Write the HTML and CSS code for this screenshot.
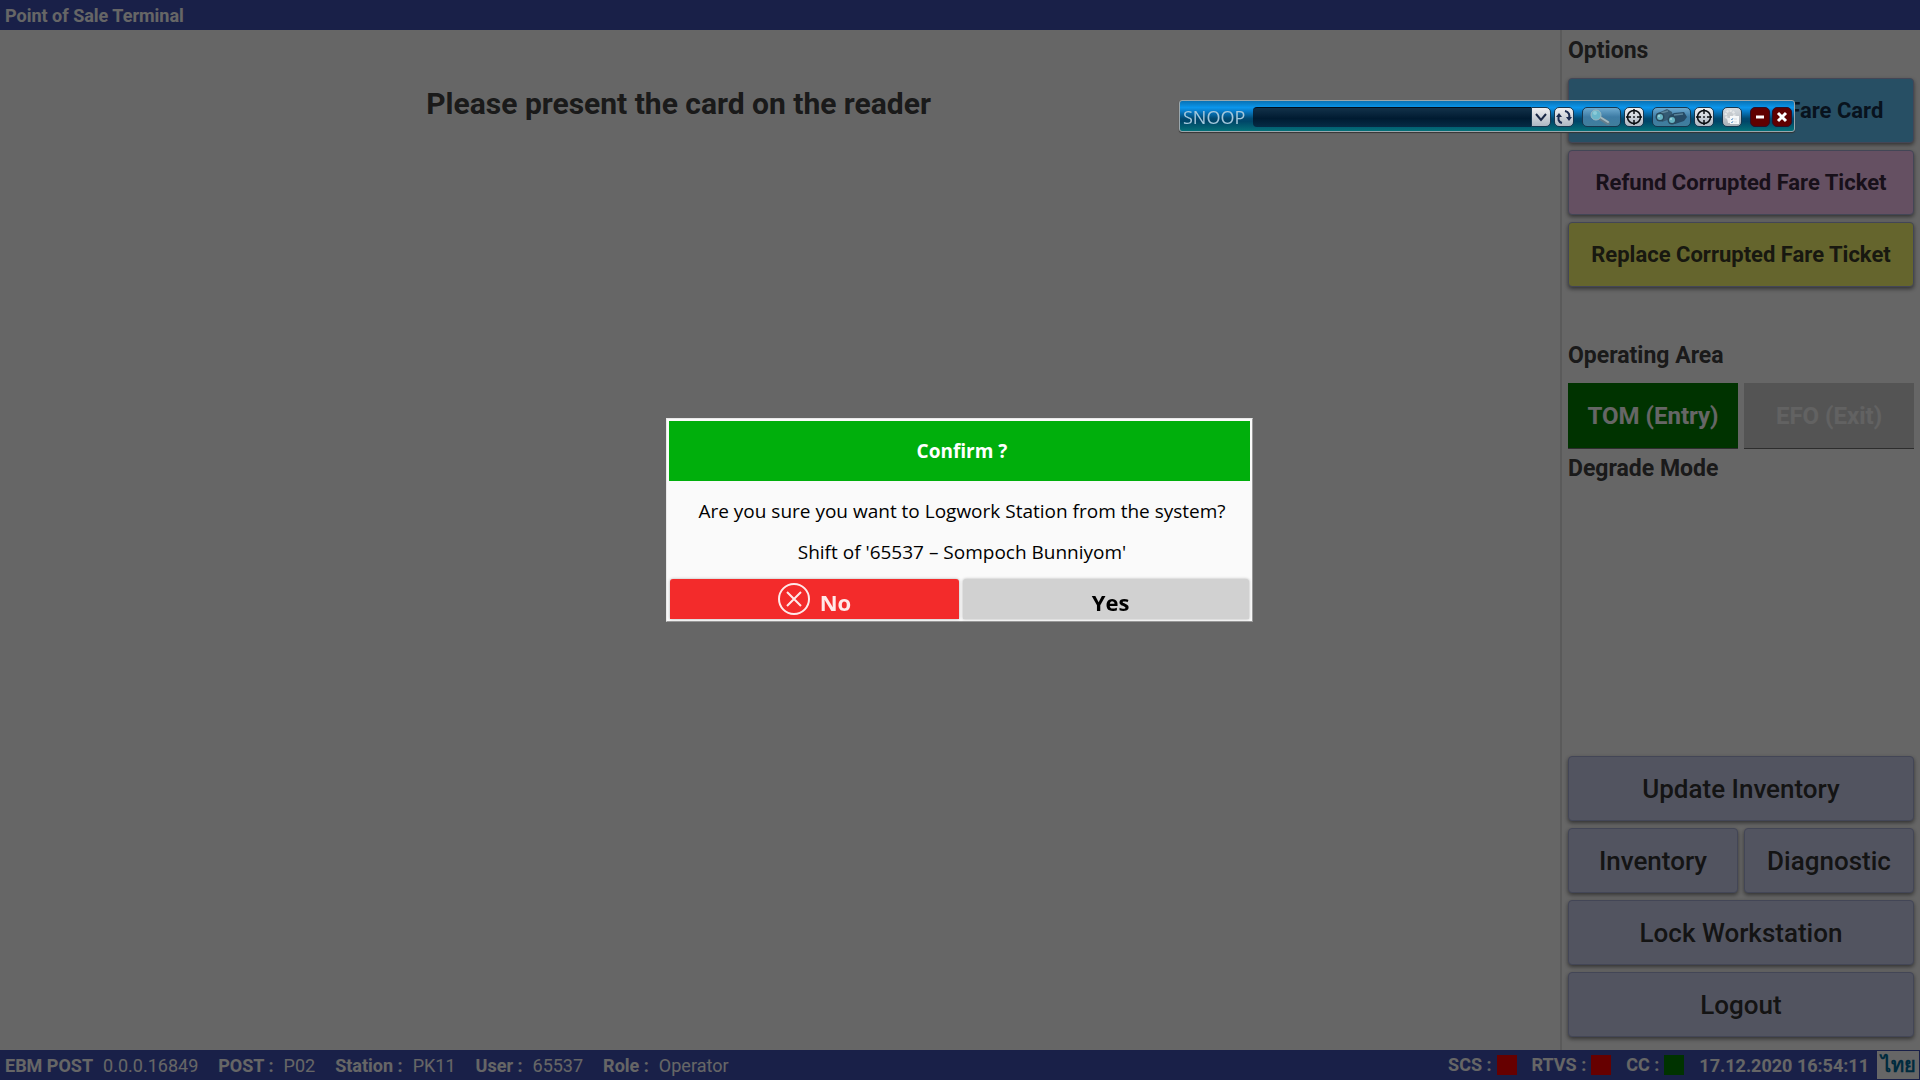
FILE: index.html
```html
<!DOCTYPE html>
<html lang="en">
<head>
<meta charset="utf-8">
<title>Point of Sale Terminal</title>
<link rel="stylesheet" href="styles.css">
</head>
<body>
<div class="app">
  <header class="titlebar">Point of Sale Terminal</header>
  <div class="content">
    <main class="stage"><h1 class="prompt">Please present the card on the reader</h1></main>
    <aside class="side">
      <h2 class="side-title">Options</h2>
      <div class="stack options">
        <button class="btn blue" type="button">Replace Corrupted Fare Card</button>
        <button class="btn pink" type="button">Refund Corrupted Fare Ticket</button>
        <button class="btn yellow" type="button">Replace Corrupted Fare Ticket</button>
      </div>
      <h2 class="side-title area-title">Operating Area</h2>
      <div class="pair">
        <button class="toggle active" type="button">TOM (Entry)</button>
        <button class="toggle" type="button">EFO (Exit)</button>
      </div>
      <h2 class="side-title mode-title">Degrade Mode</h2>
      <div class="stack actions">
        <button class="btn" type="button">Update Inventory</button>
        <div class="pair">
          <button class="btn" type="button">Inventory</button>
          <button class="btn" type="button">Diagnostic</button>
        </div>
        <button class="btn" type="button">Lock Workstation</button>
        <button class="btn" type="button">Logout</button>
      </div>
    </aside>
  </div>
  <footer class="statusbar">
    <dl class="facts">
      <div><dt>EBM POST</dt><dd>0.0.0.16849</dd></div>
      <div><dt>POST :</dt><dd>P02</dd></div>
      <div><dt>Station :</dt><dd>PK11</dd></div>
      <div><dt>User :</dt><dd>65537</dd></div>
      <div><dt>Role :</dt><dd>Operator</dd></div>
    </dl>
    <div class="states">
      <span class="state">SCS : <i class="lamp"></i></span>
      <span class="state">RTVS : <i class="lamp"></i></span>
      <span class="state">CC : <i class="lamp on"></i></span>
      <time class="clock">17.12.2020 16:54:11</time>
      <button class="lang" type="button" lang="th">ไทย</button>
    </div>
  </footer>
</div>

<div class="backdrop">
  <section class="dialog" role="dialog" aria-labelledby="dialog-title">
    <h2 class="dialog-title" id="dialog-title">Confirm ?</h2>
    <div class="dialog-body">
      <p>Are you sure you want to Logwork Station from the system?</p>
      <p>Shift of '65537 – Sompoch Bunniyom'</p>
    </div>
    <div class="dialog-actions">
      <button class="answer no" type="button">
        <svg width="34" height="34" viewBox="0 0 34 34" fill="none" stroke="currentColor" stroke-width="2"><circle cx="17" cy="17" r="15"/><path d="M10 10l14 14M24 10L10 24"/></svg>
        <span>No</span>
      </button>
      <button class="answer yes" type="button"><span>Yes</span></button>
    </div>
  </section>
</div>

<div class="snoop">
  <label class="snoop-name" for="target">SNOOP</label>
  <input class="snoop-input" id="target" type="text">
  <button class="tool drop" type="button" aria-label="Open list"><svg width="18" height="18" viewBox="0 0 18 18" fill="none" stroke="#1b2947" stroke-width="2"><path d="M4 6l5 6 5-6"/></svg></button>
  <button class="tool refresh" type="button" aria-label="Refresh"><svg width="18" height="18" viewBox="0 0 18 18"><g fill="none" stroke="#1b2b50" stroke-width="2"><path d="M7 15C3 14 3 11 4 7"/><path d="M10 3c4 1 5 4 4 7"/></g><path fill="#1b2b50" d="M1 9l3-4 3 4zM11 9h6l-3 4z"/></svg></button>
  <button class="tool wide" type="button" aria-label="Snoop"><svg width="36" height="18" viewBox="0 0 36 18"><path d="M16 10l8 5" stroke="#647e8c" stroke-width="4" stroke-linecap="round"/><path d="M16 9l8 5" stroke="#a2b8bf" stroke-width="2" stroke-linecap="round"/><circle cx="12" cy="7" r="5" fill="#69b6ca" stroke="#9bb9c1" stroke-width="1"/><circle cx="11" cy="5" r="2" fill="#8bcbd8"/></svg></button>
  <button class="tool cross" type="button" aria-label="Pick target"><svg width="18" height="18" viewBox="0 0 18 18" fill="none" stroke="#080c10" stroke-width="1.5"><circle cx="9" cy="9" r="6.5"/><path d="M9 1v5M9 12v5M1 9h5M12 9h5"/><circle cx="9" cy="9" r=".5" fill="#080c10" stroke-width="1"/></svg></button>
  <button class="tool wide" type="button" aria-label="Zoom"><svg width="36" height="18" viewBox="0 0 36 18"><path d="M2 6l11-5 5 3 1 6-11 4z" fill="#345b74"/><path d="M15 8l5-3 10-1 3 5-3 4-9 3z" fill="#264b66"/><path d="M7 5l7-2M20 7l9-1" stroke="#5b8499" stroke-width="1.5"/><circle cx="6" cy="9" r="4.5" fill="#28495d"/><circle cx="6" cy="9" r="3" fill="#67b3c2"/><circle cx="18" cy="12" r="4.5" fill="#28495d"/><circle cx="18" cy="12" r="3" fill="#67b3c2"/><circle cx="5" cy="8" r="1" fill="#a5d8df"/><circle cx="17" cy="11" r="1" fill="#a5d8df"/></svg></button>
  <button class="tool cross" type="button" aria-label="Pick zoom target"><svg width="18" height="18" viewBox="0 0 18 18" fill="none" stroke="#080c10" stroke-width="1.5"><circle cx="9" cy="9" r="6.5"/><path d="M9 1v5M9 12v5M1 9h5M12 9h5"/><circle cx="9" cy="9" r=".5" fill="#080c10" stroke-width="1"/></svg></button>
  <button class="tool settings" type="button" aria-label="Settings"><svg width="18" height="18" viewBox="0 0 18 18"><circle cx="7" cy="7" r="4" fill="none" stroke="#e5e7e8" stroke-width="3" stroke-dasharray="2 1"/><circle cx="7" cy="7" r="3" fill="#c7cbce"/><path d="M4 10h5v5H5z" fill="#eceeee"/><path d="M7 8h9v8H7z" fill="#f6f8f9"/><path d="M8 11l1 1 1-2M8 14l1 1 1-2" fill="none" stroke="#7aa7d0"/><path d="M11 11h3M11 14h3" stroke="#d9dee2"/></svg></button>
  <button class="tool danger" type="button" aria-label="Minimize"><svg width="18" height="18" viewBox="0 0 18 18"><path d="M5 9h8" stroke="#fff" stroke-width="3"/></svg></button>
  <button class="tool danger close" type="button" aria-label="Close"><svg width="18" height="18" viewBox="0 0 18 18"><path d="M5 5l8 8M13 5l-8 8" stroke="#fff" stroke-width="3"/></svg></button>
</div>
</body>
</html>
```
FILE: styles.css
```css
* { box-sizing: border-box; }
body { margin: 0; font-family: Roboto, sans-serif; color: #424242; background: #fff; }
h1, h2, p, dl, dd { margin: 0; }
button { font-family: inherit; border: 0; padding: 0; color: inherit; }
svg { display: block; flex: none; }

.app { display: flex; flex-direction: column; min-height: 100vh; }
.titlebar { background: #3f51b5; color: #fff; font-size: 18px; font-weight: 700; line-height: 28px; padding: 2px 5px 0; }
.content { display: flex; flex: 1; }
.stage { flex: 1; padding-top: 52px; }
.prompt { width: 87%; text-align: center; font-size: 30px; line-height: 44px; font-weight: 700; }

.side { width: 360px; display: flex; flex-direction: column; padding: 6px 6px 13px; border-left: 2px solid #e2e2e2; }
.side-title { font-size: 23px; line-height: 30px; font-weight: 700; }
.stack { display: flex; flex-direction: column; gap: 7px; }
.pair { display: grid; grid-template-columns: 1fr 1fr; gap: 6px; }
.options { margin-top: 12px; }
.area-title { margin-top: 54px; }
.area-title + .pair { margin-top: 12px; }
.mode-title { margin-top: 5px; }
.actions { margin-top: auto; }
.btn { height: 65px; border: 1px solid #a7aed8; border-radius: 4px; background: #ced2f0; color: #343434; font-size: 26px; font-weight: 500; box-shadow: 0 2px 4px rgba(0, 0, 0, .5); }
.options .btn { font-size: 22px; font-weight: 700; color: #333; }
.options .blue { background: #62c6fb; color: #16304c; }
.options .pink { background: #fcc8f5; color: #3c2a42; }
.options .yellow { background: #fcfc70; color: #3c3c2a; }
.toggle { height: 66px; background: #d2d2d2; color: #f5f5f5; border-bottom: 1px solid #707070; font-size: 24px; font-weight: 700; }
.toggle.active { background: #008000; color: #fff; }

.statusbar { display: flex; justify-content: space-between; align-items: center; height: 30px; background: #3f51b5; color: #fff; font-size: 18px; line-height: 24px; padding: 0 1px 0 5px; }
.facts, .facts div { display: flex; }
.facts { gap: 20px; padding-top: 2px; }
.facts div { gap: 10px; }
.facts dt, .states { font-weight: 700; }
.states { display: flex; align-items: center; gap: 15px; }
.state { display: flex; align-items: center; gap: 5px; line-height: 26px; }
.clock { padding-top: 2px; }
.lamp { width: 20px; height: 20px; background: #f00; }
.lamp.on { background: #008000; }
.lang { width: 42px; height: 28px; margin-left: -7px; background: #fff; color: #006c9c; font-size: 20px; font-weight: 700; line-height: 28px; }

.backdrop { position: fixed; inset: 0; display: grid; place-items: center; padding: 0 2px 40px 0; background: rgba(0, 0, 0, .6); }
.dialog { width: 587px; padding: 2px; background: #fafafa; border: 1px solid #e8e8e8; border-right-color: #999; border-bottom-color: #999; color: #000; font-family: "Open Sans", "Noto Sans", sans-serif; }
.dialog-title { background: #00af0c; color: #fff; font-size: 19px; line-height: 60px; text-align: center; padding-left: 6px; font-weight: 700; }
.dialog-body { padding: 10px 0 6px 6px; text-align: center; font-size: 19px; line-height: 41px; }
.dialog-actions { display: grid; grid-template-columns: 289px 1fr; gap: 4px; padding: 0 1px; }
.answer { display: flex; justify-content: center; gap: 9px; height: 40px; padding-top: 3px; border-radius: 3px 3px 0 0; font-size: 22px; line-height: 40px; font-weight: 700; box-shadow: 0 0 3px rgba(0, 0, 0, .3); }
.no { background: #f32b2b; color: #ffe9e9; }
.yes { background: #d1d1d1; color: #000; padding-left: 10px; }

.snoop { position: fixed; left: 1179px; top: 100px; display: flex; align-items: center; width: 616px; height: 32px; padding: 1px 2px 0 3px; border: 1px solid #9aa7ad; border-radius: 3px; background: linear-gradient(#0872b5 0, #0c96ec 22%, #087bc6 35%, #014a72 58%, #004668 68%, #047078 100%); box-shadow: 0 1px 1px #333; font-family: "Open Sans", "Noto Sans", sans-serif; }
.snoop-name { width: 70px; color: #a5c8dc; font-size: 18px; line-height: 28px; font-weight: 400; }
.snoop-input { flex: 1; min-width: 0; height: 20px; border: 0; border-top: 1px solid #000d1b; border-radius: 4px 0 0 4px; background: linear-gradient(#123149, #001b31 55%, #052b45); color: #fff; }
.tool { display: grid; place-items: center; width: 20px; height: 20px; border: 1px solid #17374f; border-radius: 5px; background: linear-gradient(#f0f0f2, #aeb8c3); }
.drop { border-radius: 0 5px 5px 0; margin-right: 3px; }
.refresh { margin-right: 8px; }
.wide { width: 39px; background: linear-gradient(#6eaacf, #3d7ba4 50%, #417f9c); margin-right: 3px; }
.cross { margin-right: 8px; }
.settings { margin-right: 8px; background: linear-gradient(#d6dbe0, #a7afb6); }
.danger { background: #600000; border-color: #2c1028; }
.close { margin-left: 2px; }
```
